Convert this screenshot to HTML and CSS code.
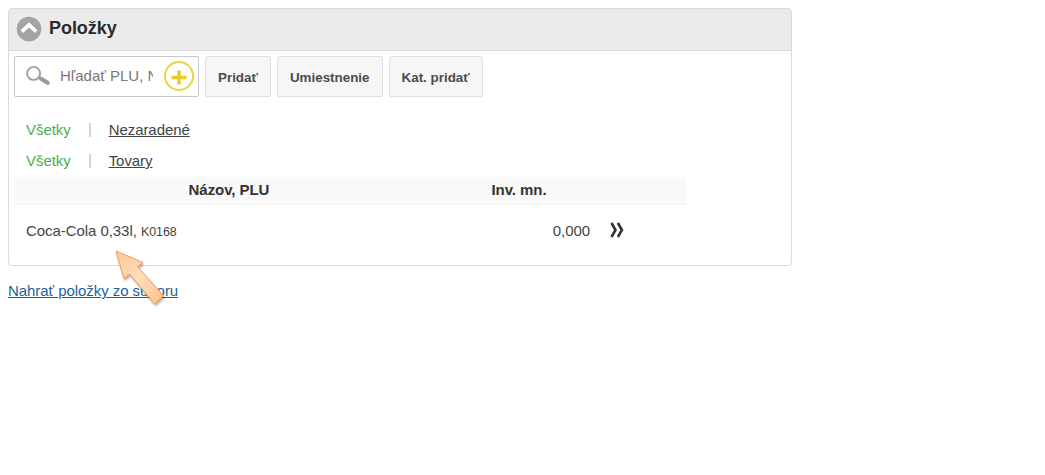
FILE: index.html
```html
<!DOCTYPE html>
<html lang="sk">
<head>
  <meta charset="UTF-8">
  <title>Položky</title>
  <link rel="stylesheet" href="styles.css">
</head>
<body>
  <div class="panel">
    <div class="panel-header">
      <svg class="toggle-icon" width="26" height="26" viewBox="0 0 26 26">
        <circle cx="13" cy="13" r="12.3" fill="#a3a3a3"/>
        <path d="M5.8 15.6L13 8.8l7.2 6.8" fill="none" stroke="#fff" stroke-width="3.8"/>
      </svg>
      <h1 class="title">Položky</h1>
    </div>

    <div class="panel-body">
      <div class="toolbar">
        <div class="search">
          <svg class="search-icon" width="26" height="22" viewBox="0 0 26 22">
            <circle cx="8.6" cy="8.4" r="6.5" fill="none" stroke="#a0a0a0" stroke-width="1.9"/>
            <path d="M13.5 12l3 2" stroke="#999" stroke-width="2.4"/>
            <path d="M16 13.8l6.6 4" stroke="#999" stroke-width="4.2" stroke-linecap="round"/>
          </svg>
          <input type="text" class="search-input" placeholder="Hľadať PLU, Názov">
          <svg class="add-icon" width="30" height="30" viewBox="0 0 30 30">
            <circle cx="15" cy="15" r="14" fill="#fff" stroke="#ecd23c" stroke-width="2"/>
            <path d="M15 9.5v14M7.5 16.5h15" stroke="#ebcb2c" stroke-width="3.6"/>
          </svg>
        </div>
        <button class="btn">Pridať</button>
        <button class="btn">Umiestnenie</button>
        <button class="btn">Kat. pridať</button>
      </div>

      <div class="filters">
        <div class="filter-row">
          <span class="filter-active">Všetky</span>
          <span class="separator"></span>
          <a href="#">Nezaradené</a>
        </div>
        <div class="filter-row">
          <span class="filter-active">Všetky</span>
          <span class="separator"></span>
          <a href="#">Tovary</a>
        </div>
      </div>

      <table class="items">
        <thead>
          <tr>
            <th class="col-name">Názov, PLU</th>
            <th class="col-count">Inv. mn.</th>
            <th></th>
          </tr>
        </thead>
        <tbody>
          <tr>
            <td>Coca-Cola 0,33l, <small>K0168</small></td>
            <td class="count">0,000</td>
            <td class="more">
              <svg width="14" height="16" viewBox="0 0 14 16">
                <path d="M1.5 1L5.5 8l-4 7M7.9 1l4 7-4 7" fill="none" stroke="#333" stroke-width="2.6"/>
              </svg>
            </td>
          </tr>
        </tbody>
      </table>
    </div>
  </div>

  <a href="#" class="upload-link">Nahrať položky zo súboru</a>

  <svg class="pointer" width="60" height="64" viewBox="0 0 60 64">
    <defs>
      <linearGradient id="pointer-fill" x1="0" y1="0" x2="1" y2="1">
        <stop offset="0" stop-color="#ffc793"/>
        <stop offset="0.5" stop-color="#ffdcba"/>
        <stop offset="1" stop-color="#ffc28a"/>
      </linearGradient>
    </defs>
    <path d="M6 6l26.8 11.5-5.2 4.3L53.5 51l-9 7.8L19.5 29l-5.5 4.6z" fill="url(#pointer-fill)" stroke="#eda05f" stroke-width="1"/>
  </svg>
</body>
</html>
```

FILE: styles.css
```css
* {
  box-sizing: border-box;
}

body {
  margin: 8px;
  font-family: Arial, "Liberation Sans", sans-serif;
  font-size: 15px;
  letter-spacing: -0.06px;
  color: #444;
  background-color: #fff;
}

.panel {
  width: 784px;
  height: 258px;
  border: 1px solid #dadada;
  border-radius: 4px;
  overflow: hidden;
}

.panel-header {
  display: flex;
  align-items: center;
  gap: 7px;
  height: 42px;
  padding: 0 0 2px 7px;
  background-color: #ebebeb;
  border-bottom: 1px solid #dadada;
}

.title {
  margin: 0;
  font-size: 18px;
  color: #2b2b2b;
}

.panel-body {
  padding: 5px;
}

.toolbar {
  display: flex;
  gap: 6px;
  height: 41px;
}

.search {
  display: flex;
  align-items: center;
  width: 185px;
  padding: 0 4px 1px 10px;
  border: 1px solid #c8c8c8;
  border-radius: 2px;
}

.search-input {
  width: 93px;
  margin: 0 11px 0 9px;
  padding: 0 0 1px;
  border: none;
  background: none;
  font: inherit;
}

.search-input::placeholder {
  color: #777;
}

.search-icon,
.add-icon {
  flex-shrink: 0;
}

.btn {
  padding: 2px 12px 0;
  border: 1px solid #e0e0e0;
  border-radius: 2px;
  background-color: #f6f6f6;
  color: #4c4c4c;
  font-family: inherit;
  font-size: 13.4px;
  font-weight: bold;
}

.filters {
  padding: 17px 0 1px 12px;
}

.filter-row {
  display: flex;
  align-items: center;
  height: 31px;
}

.filter-row a {
  color: #444;
}

.filter-active {
  color: #4cae4c;
}

.separator {
  width: 2px;
  height: 14px;
  margin: 0 18px;
  background-color: #d4d4d4;
}

.items {
  width: 673px;
  border-collapse: collapse;
  table-layout: fixed;
}

.items th {
  height: 27px;
  padding: 0 0 2px;
  background-color: #f9f9f9;
  border-bottom: 1px solid #f0f0f0;
  color: #333;
}

.items td {
  height: 52px;
  padding: 0 0 0 12px;
}

.items small {
  font-size: 12.5px;
}

.col-name {
  width: 430px;
}

.col-count {
  width: 150px;
}

.items .count {
  padding-right: 4px;
  text-align: right;
}

.items .more {
  padding-left: 16px;
}

.more svg {
  display: block;
}

.upload-link {
  display: inline-block;
  margin-top: 16px;
  color: #1b629b;
}

/* hint arrow over the list */
.pointer {
  position: absolute;
  left: 110px;
  top: 245px;
  filter: drop-shadow(1px 2px 1px rgba(0, 0, 0, 0.3));
}
```
